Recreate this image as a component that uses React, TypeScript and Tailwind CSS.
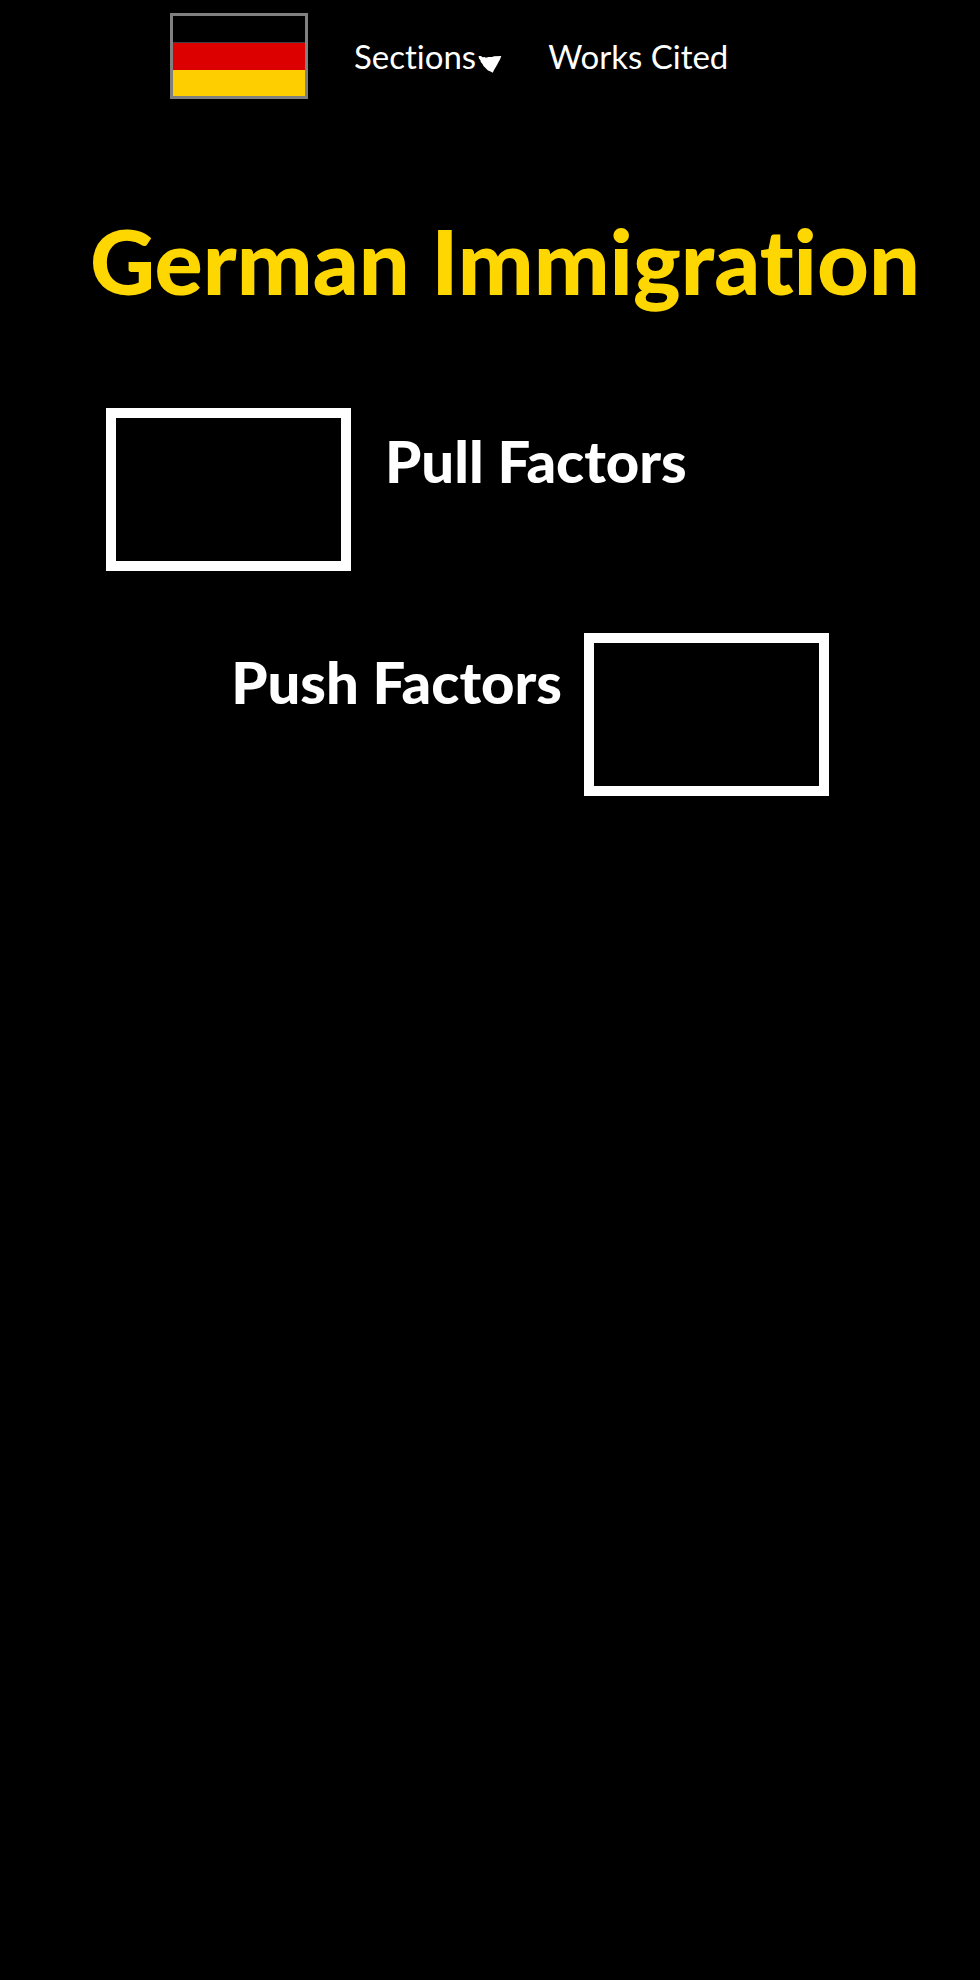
const factors = [
  { title: "Pull Factors", href: "#pull", boxFirst: true },
  { title: "Push Factors", href: "#push", boxFirst: false },
];

function Flag() {
  return (
    <a
      href="#home"
      aria-label="Home"
      className="flex h-[86px] w-[138px] shrink-0 flex-col border-[3px] border-[#808080] bg-black"
    >
      <span className="flex-1 border-b border-[#404040] bg-black" />
      <span className="flex-1 bg-[#dd0000]" />
      <span className="flex-1 bg-[#ffce00]" />
    </a>
  );
}

function Arrow() {
  return (
    <svg viewBox="0 0 24 18" className="h-[18px] w-6" fill="#ffffff" aria-hidden="true">
      <path d="M0.5 1 L3 1 L4.5 2.2 L6.5 2 L8 2.8 L10.5 2 L14 2 L16 1.2 L23.3 1 L22 4.5 L20.5 7 L19 10 L17.5 12.5 L16 15 L14.8 17.8 L12.5 16.5 L10 15.5 L7.5 13 L5.5 11 L4.5 9 L2.8 7 L2.3 5 L1 3.5 Z" />
    </svg>
  );
}

export default function App() {
  return (
    <div className="min-h-screen bg-black font-['Lato',sans-serif] text-white [font-variant-ligatures:none]">
      <nav className="flex items-center pt-[13px] pl-[170px] text-[33px] leading-none">
        <Flag />
        <button type="button" aria-haspopup="menu" className="ml-[46px] flex items-end gap-0.5">
          Sections
          <Arrow />
        </button>
        <a href="#works-cited" className="ml-[46px] whitespace-nowrap">
          Works Cited
        </a>
      </nav>
      <main>
        <h1 className="mt-[116px] pl-[30px] text-center text-[90px] leading-none font-black text-[#ffd700]">
          German Immigration
        </h1>
        <div className="mt-[103px] flex flex-col gap-[62px]">
          {factors.map((f) =>
            f.boxFirst ? (
              <section key={f.title} className="flex items-start gap-[34px] pl-[106px]">
                <a href={f.href} aria-label={f.title} className="h-[163px] w-[245px] shrink-0 border-10 border-white" />
                <h2 className="pt-6 text-[58px] leading-none font-black whitespace-nowrap">{f.title}</h2>
              </section>
            ) : (
              <section key={f.title} className="flex items-start justify-end gap-[22px] pr-[151px]">
                <h2 className="pt-5 text-[58px] leading-none font-black whitespace-nowrap">{f.title}</h2>
                <a href={f.href} aria-label={f.title} className="h-[163px] w-[245px] shrink-0 border-10 border-white" />
              </section>
            ),
          )}
        </div>
      </main>
    </div>
  );
}
